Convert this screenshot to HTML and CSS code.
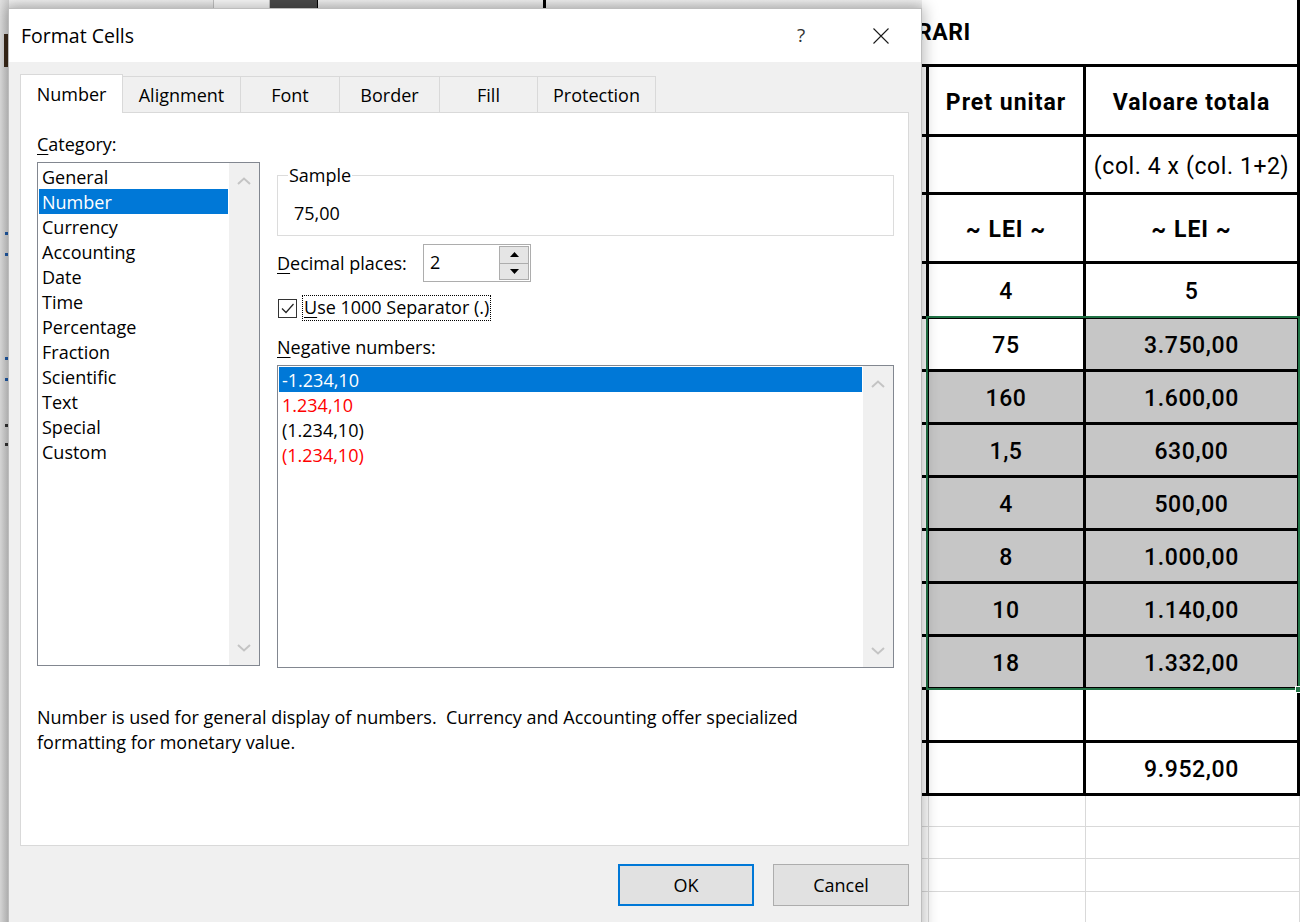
FILE: index.html
```html
<!DOCTYPE html>
<html>
<head>
<meta charset="utf-8">
<link rel="stylesheet" href="styles.css">
</head>
<body>
<div class="screen">
  <div class="sheet">
    <div class="title-row"><span class="title-text">RARI</span></div>
    <div class="table">
      <div class="c"></div><div class="c hd">Pret unitar</div><div class="c hd">Valoare totala</div>
      <div class="c"></div><div class="c"></div><div class="c rg">(col. 4 x (col. 1+2)</div>
      <div class="c"></div><div class="c hd">~ LEI ~</div><div class="c hd">~ LEI ~</div>
      <div class="c"></div><div class="c md">4</div><div class="c md">5</div>
      <div class="c"></div><div class="c md">75</div><div class="c md sel">3.750,00</div>
      <div class="c"></div><div class="c md sel">160</div><div class="c md sel">1.600,00</div>
      <div class="c"></div><div class="c md sel">1,5</div><div class="c md sel">630,00</div>
      <div class="c"></div><div class="c md sel">4</div><div class="c md sel">500,00</div>
      <div class="c"></div><div class="c md sel">8</div><div class="c md sel">1.000,00</div>
      <div class="c"></div><div class="c md sel">10</div><div class="c md sel">1.140,00</div>
      <div class="c"></div><div class="c md sel">18</div><div class="c md sel">1.332,00</div>
      <div class="c"></div><div class="c"></div><div class="c"></div>
      <div class="c"></div><div class="c"></div><div class="c md">9.952,00</div>
      <div class="c thin"></div><div class="c thin"></div><div class="c thin"></div>
      <div class="c thin"></div><div class="c thin"></div><div class="c thin"></div>
      <div class="c thin"></div><div class="c thin"></div><div class="c thin"></div>
      <div class="c thin"></div><div class="c thin"></div><div class="c thin"></div>
    </div>
  </div>

  <div class="selection"><span class="fill-handle"></span></div>

  <div class="top-strip">
    <span class="ts-gap"></span><span class="ts-box"></span><span class="ts-dark"></span><span class="ts-rest"></span><span class="ts-line"></span>
  </div>
  <div class="left-strip">
    <span class="ls-glyph"></span>
    <span class="ls-dot ls-d1"></span><span class="ls-dot ls-d2"></span>
    <span class="ls-dot ls-d3"></span><span class="ls-dot ls-d4"></span>
    <span class="ls-dot ls-d5 dark"></span><span class="ls-dot ls-d6 dark"></span>
  </div>

  <div class="dialog">
    <div class="titlebar">
      <span class="title">Format Cells</span>
      <span class="tb-btn tb-help">?</span>
      <span class="tb-btn tb-close"><svg width="16" height="16" viewBox="0 0 16 16"><path d="M0.5 0.5L15.5 15.5M15.5 0.5L0.5 15.5" stroke="#1a1a1a" stroke-width="1.1" fill="none"/></svg></span>
    </div>
    <div class="body">
      <div class="tabs">
        <div class="tab active w-number">Number</div>
        <div class="tab w-align">Alignment</div>
        <div class="tab w-font">Font</div>
        <div class="tab w-border">Border</div>
        <div class="tab w-fill">Fill</div>
        <div class="tab w-prot">Protection</div>
      </div>
      <div class="panel">
        <div class="panel-main">
          <div class="col-left">
            <div class="label"><u>C</u>ategory:</div>
            <div class="listbox cat">
              <div class="items">
                <div class="item">General</div>
                <div class="item sel-item">Number</div>
                <div class="item">Currency</div>
                <div class="item">Accounting</div>
                <div class="item">Date</div>
                <div class="item">Time</div>
                <div class="item">Percentage</div>
                <div class="item">Fraction</div>
                <div class="item">Scientific</div>
                <div class="item">Text</div>
                <div class="item">Special</div>
                <div class="item">Custom</div>
              </div>
              <div class="vscroll cat-scroll">
                <svg width="14" height="8" viewBox="0 0 14 8"><polyline points="1,7 7,1.5 13,7" fill="none" stroke="#c4c4c4" stroke-width="2"/></svg>
                <svg width="14" height="8" viewBox="0 0 14 8"><polyline points="1,1 7,6.5 13,1" fill="none" stroke="#c4c4c4" stroke-width="2"/></svg>
              </div>
            </div>
          </div>
          <div class="col-right">
            <fieldset class="sample">
              <legend>Sample</legend>
              <div class="sample-val">75,00</div>
            </fieldset>
            <div class="dec-row">
              <span class="dec-label"><u>D</u>ecimal places:</span>
              <div class="spin">
                <span class="spin-val">2</span>
                <div class="spin-btns">
                  <div class="spin-btn"><svg width="9" height="5" viewBox="0 0 9 5"><polygon points="0,5 4.5,0 9,5" fill="#000"/></svg></div>
                  <div class="spin-btn"><svg width="9" height="5" viewBox="0 0 9 5"><polygon points="0,0 4.5,5 9,0" fill="#000"/></svg></div>
                </div>
              </div>
            </div>
            <div class="chk-row">
              <span class="chk"><svg width="17" height="17" viewBox="0 0 17 17"><polyline points="3,8.5 7,12.5 14.5,4" fill="none" stroke="#222" stroke-width="1.2"/></svg></span>
              <span class="chk-label"><u>U</u>se 1000 Separator (.)</span>
            </div>
            <div class="label neg-label"><u>N</u>egative numbers:</div>
            <div class="listbox neg">
              <div class="items">
                <div class="item sel-item">-1.234,10</div>
                <div class="item red">1.234,10</div>
                <div class="item">(1.234,10)</div>
                <div class="item red">(1.234,10)</div>
              </div>
              <div class="vscroll neg-scroll">
                <svg width="14" height="8" viewBox="0 0 14 8"><polyline points="1,7 7,1.5 13,7" fill="none" stroke="#c4c4c4" stroke-width="2"/></svg>
                <svg width="14" height="8" viewBox="0 0 14 8"><polyline points="1,1 7,6.5 13,1" fill="none" stroke="#c4c4c4" stroke-width="2"/></svg>
              </div>
            </div>
          </div>
        </div>
        <div class="desc">Number is used for general display of numbers.&nbsp; Currency and Accounting offer specialized<br>formatting for monetary value.</div>
      </div>
      <div class="footer">
        <button class="btn ok">OK</button>
        <button class="btn">Cancel</button>
      </div>
    </div>
  </div>
</div>
</body>
</html>
```

FILE: styles.css
```css
* { box-sizing: border-box; }
html, body { margin: 0; padding: 0; }
body { background: #fff; }

.screen {
  position: relative;
  width: 1300px;
  height: 922px;
  overflow: hidden;
  background: #fff;
}

/* ---------- spreadsheet ---------- */
.sheet {
  width: 1300px;
  font-family: Roboto, "Liberation Sans", sans-serif;
  color: #000;
}
.title-row {
  height: 64px;
  border-right: 3px solid #000;
  padding-left: 917px;
  display: flex;
  align-items: center;
}
.title-text {
  font-weight: 700;
  font-size: 23px;
  letter-spacing: 0.5px;
}
.table {
  margin-left: 900px;
  width: 400px;
  border-top: 3px solid #000;
  display: grid;
  grid-template-columns: 29px 157px 214px;
  grid-template-rows: 70px 58px 69px 55px repeat(9, 53px) 31px 32px 33px 32px;
}
.c {
  border-right: 3px solid #000;
  border-bottom: 3px solid #000;
  display: flex;
  align-items: center;
  justify-content: center;
  font-size: 23px;
  white-space: nowrap;
  padding-top: 3px;
}
.c.hd { font-weight: 700; letter-spacing: 1px; }
.c.md { font-weight: 500; letter-spacing: 0.6px; }
.c.rg { font-weight: 400; letter-spacing: 0.6px; }
.c.sel { background: #c6c6c6; }
.c.thin {
  border-right: 1px solid #d9d9d9;
  border-bottom: 1px solid #d9d9d9;
}

.selection {
  position: absolute;
  left: 926px;
  top: 316px;
  width: 374px;
  height: 374px;
  border: 2px solid #217346;
}
.fill-handle {
  position: absolute;
  right: -4px;
  bottom: -5px;
  width: 7px;
  height: 7px;
  background: #217346;
  border: 1px solid #fff;
}

/* ---------- background window bits ---------- */
.top-strip {
  position: absolute;
  left: 0;
  top: 0;
  width: 922px;
  height: 9px;
  display: flex;
  background: linear-gradient(#f2f2f2, #e4e4e4);
}
.ts-gap { width: 213px; }
.ts-box { width: 57px; background: #fafafa; border: 1px solid #c3c3c3; border-top: 0; }
.ts-dark { width: 48px; background: #4b4b4b; border-right: 1px solid #000; }
.ts-rest { width: 225px; }
.ts-line { width: 3px; background: #000; }

.left-strip {
  position: absolute;
  left: 0;
  top: 0;
  width: 9px;
  height: 922px;
  background: linear-gradient(to right, #e2e2e2, #cfcfcf);
}
.ls-glyph { position: absolute; left: 4px; top: 34px; width: 4px; height: 33px; background: #3b2a1a; }
.ls-dot { position: absolute; left: 5px; width: 3px; height: 3px; background: #1f5aa6; }
.ls-dot.dark { background: #333; }
.ls-d1 { top: 232px; }
.ls-d2 { top: 253px; }
.ls-d3 { top: 357px; }
.ls-d4 { top: 378px; }
.ls-d5 { top: 424px; }
.ls-d6 { top: 443px; }

/* ---------- dialog ---------- */
.dialog {
  position: absolute;
  left: 8px;
  top: 8px;
  width: 914px;
  height: 930px;
  background: #f0f0f0;
  border: 1px solid #bdbdbd;
  box-shadow: 0 0 14px 2px rgba(0, 0, 0, 0.28);
  display: flex;
  flex-direction: column;
  font-family: "Open Sans", "Noto Sans", sans-serif;
  font-size: 18px;
  color: #000;
}
.titlebar {
  height: 53px;
  background: #fff;
  display: flex;
  align-items: center;
  padding-left: 12px;
  padding-right: 20px;
  flex: none;
}
.title {
  font-size: 19.5px;
  flex: 1;
  padding-bottom: 1px;
}
.tb-btn {
  width: 40px;
  display: flex;
  justify-content: center;
  align-items: center;
}
.tb-help {
  font-size: 19px;
  color: #333;
  margin-right: 40px;
  padding-bottom: 2px;
}
.tb-close svg { display: block; }

.body {
  flex: 1;
  padding: 12px 12px 0 11px;
  display: flex;
  flex-direction: column;
}
.tabs {
  height: 38px;
  display: flex;
  align-items: flex-end;
  flex: none;
}
.tab {
  height: 36px;
  border: 1px solid #d9d9d9;
  border-bottom: 0;
  background: #f0f0f0;
  display: flex;
  align-items: center;
  justify-content: center;
  margin-left: -1px;
}
.tab.active {
  height: 39px;
  margin-left: 0;
  margin-bottom: -1px;
  background: #fff;
  position: relative;
  z-index: 1;
  padding-bottom: 1px;
}
.w-number { width: 103px; }
.w-align { width: 119px; }
.w-font { width: 100px; }
.w-border { width: 101px; }
.w-fill { width: 99px; }
.w-prot { width: 119px; }

.panel {
  height: 734px;
  background: #fff;
  border: 1px solid #d9d9d9;
  padding: 19px 14px 0 16px;
  flex: none;
}
.panel-main {
  display: flex;
  gap: 17px;
}
.col-left { width: 223px; }
.col-right { width: 617px; padding-top: 31px; }

.label { line-height: 24px; height: 24px; margin-bottom: 6px; }
u { text-decoration: underline; text-underline-offset: 3px; text-decoration-thickness: 1px; }

.listbox {
  border: 1px solid #828790;
  display: flex;
  background: #fff;
}
.listbox.cat { height: 504px; }
.listbox.neg { height: 303px; }
.items { flex: 1; padding: 1px 1px 0 1px; }
.item {
  height: 25px;
  line-height: 26px;
  padding-left: 3px;
  white-space: nowrap;
}
.item.sel-item { background: #0078d7; color: #fff; }
.item.red { color: #ff0000; }
.vscroll {
  width: 30px;
  background: #f0f0f0;
  display: flex;
  flex-direction: column;
  align-items: center;
  justify-content: space-between;
}
.cat-scroll { padding: 14px 0 13px; }
.neg-scroll { padding: 14px 0 12px; }
.vscroll svg { display: block; }

.sample {
  margin: 0;
  padding: 0 10px 10px 10px;
  border: 1px solid #dcdcdc;
  min-inline-size: 0;
}
.sample legend {
  padding: 0 1px;
  line-height: 24px;
  margin-left: 0;
}
.sample-val {
  margin-top: 14px;
  padding-left: 6px;
  line-height: 24px;
}

.dec-row {
  margin-top: 8px;
  height: 38px;
  display: flex;
  align-items: center;
}
.dec-label { width: 146px; }
.spin {
  width: 108px;
  height: 38px;
  border: 1px solid #adadad;
  display: flex;
  align-items: center;
  justify-content: space-between;
  padding: 1px 1px 1px 6px;
}
.spin-val { padding-bottom: 3px; }
.spin-btns {
  width: 30px;
  height: 34px;
  display: flex;
  flex-direction: column;
}
.spin-btn {
  flex: 1;
  background: #e5e5e5;
  border: 1px solid #adadad;
  display: flex;
  align-items: center;
  justify-content: center;
}
.spin-btn + .spin-btn { border-top: 0; }
.spin-btn svg { display: block; }

.chk-row {
  margin-top: 13px;
  height: 26px;
  display: flex;
  align-items: center;
}
.chk {
  width: 19px;
  height: 19px;
  border: 1px solid #333;
  margin-left: 1px;
  display: flex;
  align-items: center;
  justify-content: center;
}
.chk svg { display: block; }
.chk-label {
  margin-left: 5px;
  height: 26px;
  line-height: 25px;
  padding: 0 2px;
  outline: 1px dotted #000;
  outline-offset: -1px;
}

.neg-label { margin-top: 14px; }

.desc {
  margin-top: 37px;
  line-height: 25px;
  white-space: nowrap;
}

.footer {
  display: flex;
  justify-content: flex-end;
  gap: 19px;
  padding-top: 18px;
}
.btn {
  width: 136px;
  height: 42px;
  background: #e1e1e1;
  border: 1px solid #adadad;
  font-family: "Open Sans", "Noto Sans", sans-serif;
  font-size: 18px;
  color: #000;
  padding: 0;
  margin: 0;
}
.btn.ok { border: 2px solid #0078d7; }
```
